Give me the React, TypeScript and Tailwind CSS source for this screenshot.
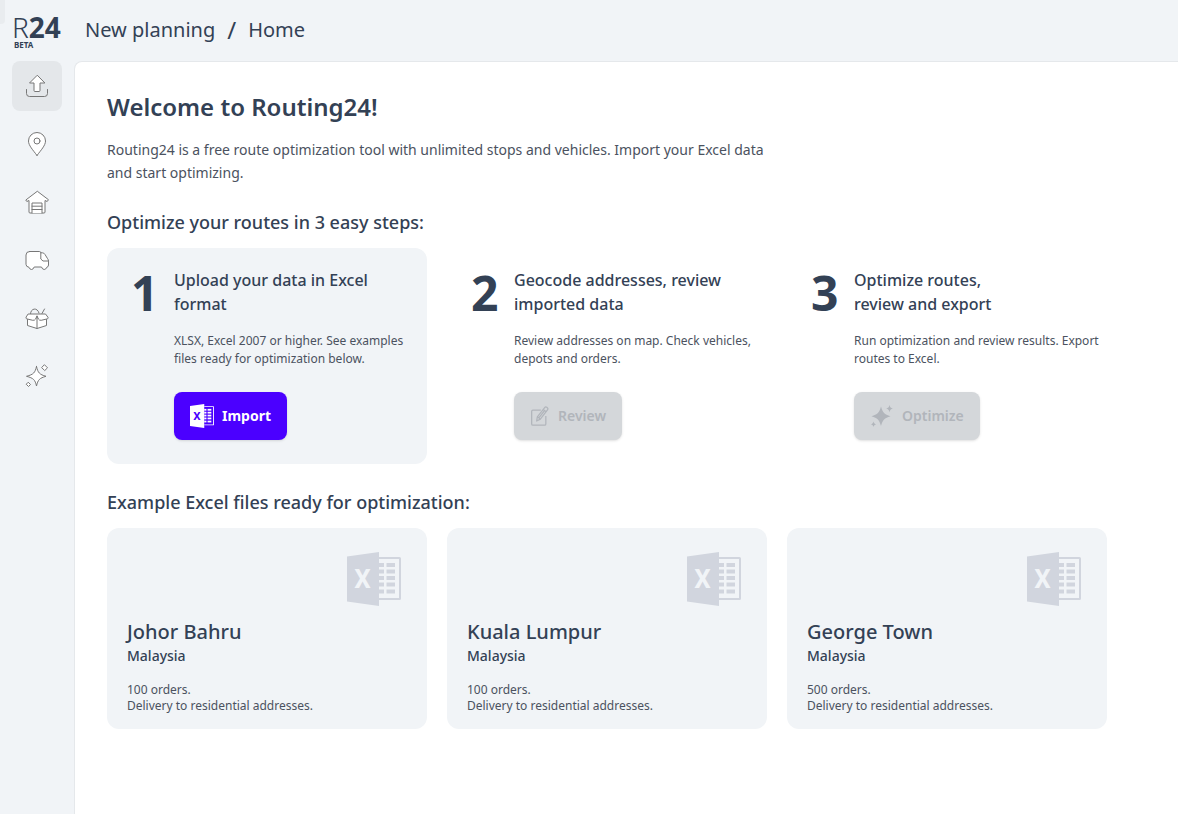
import { FC, ReactNode } from "react";

type IconProps = { className?: string };

const ExcelIcon: FC<{ className?: string; letterClass: string }> = ({ className, letterClass }) => (
    <svg viewBox="0 0 54 54" fill="currentColor" className={className} aria-hidden="true">
        <path d="M0 4.5 32 0v54L0 49.5Z" />
        <path d="M32 5h20.5a1.5 1.5 0 0 1 1.5 1.5v40a1.5 1.5 0 0 1-1.5 1.5H32v-2h20V7H32Z" />
        {[11, 17.5, 24, 30.5, 37.5].map((y) => (
            <g key={y}>
                <rect x="32" y={y} width="5" height="4" />
                <rect x="39.5" y={y} width="8.5" height="4" />
            </g>
        ))}
        <text
            x="15.5"
            y="36"
            textAnchor="middle"
            fontSize="26"
            fontWeight="700"
            fontFamily="Roboto, sans-serif"
            className={letterClass}
        >
            X
        </text>
    </svg>
);

const LineIcon: FC<{ children: ReactNode }> = ({ children }) => (
    <svg
        viewBox="0 0 24 24"
        fill="#fff"
        stroke="#777"
        strokeWidth="1"
        strokeLinecap="round"
        strokeLinejoin="round"
        className="size-6"
        aria-hidden="true"
    >
        {children}
    </svg>
);

const PencilIcon: FC<IconProps> = ({ className }) => (
    <svg
        viewBox="0 0 24 24"
        fill="none"
        stroke="currentColor"
        strokeWidth="1.5"
        strokeLinejoin="round"
        className={className}
        aria-hidden="true"
    >
        <path d="M13 5H3.500A1.500 1.500 0 0 0 2 6.500v15A1.500 1.500 0 0 0 3.500 23h14a1.500 1.500 0 0 0 1.500-1.500V12" />
        <path d="m8 18 .8-5L17.600 1.900a1.800 1.800 0 0 1 2.500-.3l.6.500a1.800 1.800 0 0 1 .3 2.500L12.400 15.700Z" />
        <path d="m8.800 13 3.600 2.700M15.900 4.100l3.500 2.700M10.600 14.300 17.600 5.400" />
    </svg>
);

const SparkIcon: FC<IconProps> = ({ className }) => (
    <svg viewBox="0 0 24 24" fill="currentColor" className={className} aria-hidden="true">
        <path d="M11 2.500c1.600 6 3.500 8 9.500 9.700-6 1.800-7.900 3.800-9.500 9.800-1.600-6-3.500-8-9.500-9.800C7.500 10.500 9.400 8.500 11 2.500Z" />
        <path d="M19.500 1c.6 2.300 1.200 3 3.300 3.600-2.100.6-2.700 1.300-3.300 3.600-.6-2.300-1.200-3-3.300-3.600 2.100-.6 2.700-1.300 3.300-3.600ZM3.500 17.500c.4 1.700 1 2.300 2.600 2.800-1.600.5-2.200 1.100-2.600 2.800-.4-1.700-1-2.300-2.600-2.800 1.600-.5 2.200-1.100 2.600-2.800Z" />
    </svg>
);

const navItems: { label: string; icon: ReactNode }[] = [
    {
        label: "Import",
        icon: (
            <LineIcon>
                <path d="M1.500 15.500v4a3 3 0 0 0 3 3h15a3 3 0 0 0 3-3v-4" fill="none" />
                <path d="M12 1.500 4.500 9H9v7.500a1 1 0 0 0 1 1h4a1 1 0 0 0 1-1V9h4.500Z" />
            </LineIcon>
        ),
    },
    {
        label: "Addresses",
        icon: (
            <LineIcon>
                <path d="M12 23.500C8 18 3.500 13.500 3.500 9a8.500 8.500 0 0 1 17 0c0 4.500-4.500 9-8.500 14.500Z" />
                <circle cx="12" cy="9" r="3" />
            </LineIcon>
        ),
    },
    {
        label: "Depots",
        icon: (
            <LineIcon>
                <path d="M12 1.500 .8 10l1 1.500L4 10.500V22a1 1 0 0 0 1 1h14a1 1 0 0 0 1-1V10.500l2.200 1 1-1.500Z" />
                <path d="M7 23V13h10v10M7 16.200h10M7 19.500h10" />
            </LineIcon>
        ),
    },
    {
        label: "Vehicles",
        icon: (
            <LineIcon>
                <path d="M4.500 3.500h9.800q1.500 0 1.500 1.300h1.600q1.600 0 2.600 1.700l2.600 4.200q.9 1 .9 2.400v3.900q0 2-1.800 2.300-.7 2.200-2.500 2.200t-2.700-2.500H9.200Q8.300 21.500 6.500 21.500T4 19.300q-3-.5-3-3V7Q1 3.500 4.500 3.500Z" />
                <path d="M15.800 4.800V11l2.200 2h5" fill="none" />
            </LineIcon>
        ),
    },
    {
        label: "Orders",
        icon: (
            <LineIcon>
                <path d="M5.500 8C5.500 2 12.500 1 14 7M17 7.500 19.500 3" fill="none" />
                <path d="M2.500 12.500v7l9.500 3 9.500-3v-7" />
                <path d="M3.500 8h17l2.500 3.300q.6 1.200-.8 1.600l-6 1.400q-2 .2-2.800-1.300L12 10l-1.400 3q-.8 1.500-2.800 1.300l-6-1.400Q.4 12.500 1 11.300Z" />
                <path d="M12 10v12.500" />
            </LineIcon>
        ),
    },
    {
        label: "Optimize",
        icon: (
            <LineIcon>
                <path d="M11.500 2.500c1.400 6.300 3 8 9.500 9.800-6.500 1.800-8.100 3.500-9.500 9.700-1.400-6.200-3-7.900-10-9.700 7-1.800 8.600-3.500 10-9.800Z" />
                <path d="m19.700 1 2.800 2.800-2.800 2.800-2.800-2.800ZM3.500 18.500l2 2-2 2-2-2Z" />
            </LineIcon>
        ),
    },
];

const steps = [
    {
        title: ["Upload your data in Excel", "format"],
        text: "XLSX, Excel 2007 or higher. See examples files ready for optimization below.",
        button: "Import",
        icon: <ExcelIcon className="size-6" letterClass="fill-[#4b00ff]" />,
        active: true,
    },
    {
        title: ["Geocode addresses, review", "imported data"],
        text: "Review addresses on map. Check vehicles, depots and orders.",
        button: "Review",
        icon: <PencilIcon className="size-5" />,
        active: false,
    },
    {
        title: ["Optimize routes,", "review and export"],
        text: "Run optimization and review results. Export routes to Excel.",
        button: "Optimize",
        icon: <SparkIcon className="size-6" />,
        active: false,
    },
];

const examples = [
    { city: "Johor Bahru", country: "Malaysia", orders: 100 },
    { city: "Kuala Lumpur", country: "Malaysia", orders: 100 },
    { city: "George Town", country: "Malaysia", orders: 500 },
];

const Header: FC = () => (
    <header className="relative flex h-[61px] flex-none items-center">
        {/* Drawer handle peeking in from the left edge */}
        <div className="absolute left-0 top-0 h-6 w-[5px] rounded-br bg-[#e9ecef]" />
        <a href="#" className="ml-3 flex w-[73px] flex-col">
            <span className="text-[28px] leading-7 font-light">
                R<b className="font-bold">24</b>
            </span>
            <span className="pl-0.5 text-[8px] leading-[8px] font-bold">BETA</span>
        </a>
        <nav className="flex items-center gap-3 pb-0.5 text-xl">
            <a href="#">New planning</a>
            <span className="text-2xl">/</span>
            <a href="#">Home</a>
        </nav>
    </header>
);

const Sidebar: FC = () => (
    <nav className="flex w-[74px] flex-none flex-col items-center gap-2">
        {navItems.map((item, i) => (
            <button
                key={item.label}
                type="button"
                aria-label={item.label}
                className={`flex size-[50px] items-center justify-center rounded-lg ${i === 0 ? "bg-[#e4e7ea]" : ""}`}
            >
                {item.icon}
            </button>
        ))}
    </nav>
);

export default function App() {
    return (
        <div className="flex min-h-screen flex-col bg-[#f1f4f7] font-['Noto_Sans',sans-serif] text-[#334155]">
            <Header />
            <div className="flex flex-1">
                <Sidebar />
                <main className="min-w-0 flex-1 rounded-tl-lg border-l border-t border-[#e5e8eb] bg-white px-8 pt-7">
                    <h1 className="text-2xl leading-[34px] font-semibold">Welcome to Routing24!</h1>
                    <p className="mt-3.5 max-w-2xl text-sm leading-[23px] text-[#4b5260]">
                        Routing24 is a free route optimization tool with unlimited stops and vehicles. Import your Excel
                        data and start optimizing.
                    </p>

                    <h2 className="mt-6 text-lg leading-7 font-medium">Optimize your routes in 3 easy steps:</h2>
                    <div className="mt-3 grid max-w-[1000px] grid-cols-3 gap-5">
                        {steps.map((step, i) => (
                            <section
                                key={step.button}
                                className={`flex min-h-[216px] items-start rounded-xl pt-5 pr-1 ${step.active ? "bg-[#f1f4f7]" : ""}`}
                            >
                                <span className="w-[67px] flex-none pl-6 text-5xl leading-[50px] font-bold">{i + 1}</span>
                                <div>
                                    <h3 className="text-base leading-6 font-medium">
                                        {step.title[0]}
                                        <br />
                                        {step.title[1]}
                                    </h3>
                                    <p className="mt-4 text-xs leading-[18px] text-[#4b5260]">{step.text}</p>
                                    <button
                                        type="button"
                                        disabled={!step.active}
                                        className={`mt-6 flex h-12 items-center gap-2 rounded-lg px-4 text-sm shadow-sm ${
                                            step.active
                                                ? "bg-[#4b00ff] font-bold text-white"
                                                : "bg-[#d4d7da] font-semibold text-[#b1b5bb]"
                                        }`}
                                    >
                                        {step.icon}
                                        {step.button}
                                    </button>
                                </div>
                            </section>
                        ))}
                    </div>

                    <h2 className="mt-6 text-lg leading-7 font-medium">Example Excel files ready for optimization:</h2>
                    <div className="mt-3 grid max-w-[1000px] grid-cols-3 gap-5 pb-8">
                        {examples.map((file) => (
                            <a
                                key={file.city}
                                href="#"
                                className="flex min-h-[201px] flex-col rounded-xl bg-[#f1f4f7] px-5 pt-6"
                            >
                                <ExcelIcon className="mr-[6px] size-[54px] self-end text-[#d1d5de]" letterClass="fill-[#f1f4f7]" />
                                <h3 className="mt-3 text-xl leading-7 font-medium">{file.city}</h3>
                                <p className="text-sm leading-5 font-medium">{file.country}</p>
                                <p className="mt-4 text-xs leading-4 text-[#4b5260]">
                                    {file.orders} orders.
                                    <br />
                                    Delivery to residential addresses.
                                </p>
                            </a>
                        ))}
                    </div>
                </main>
            </div>
        </div>
    );
}
